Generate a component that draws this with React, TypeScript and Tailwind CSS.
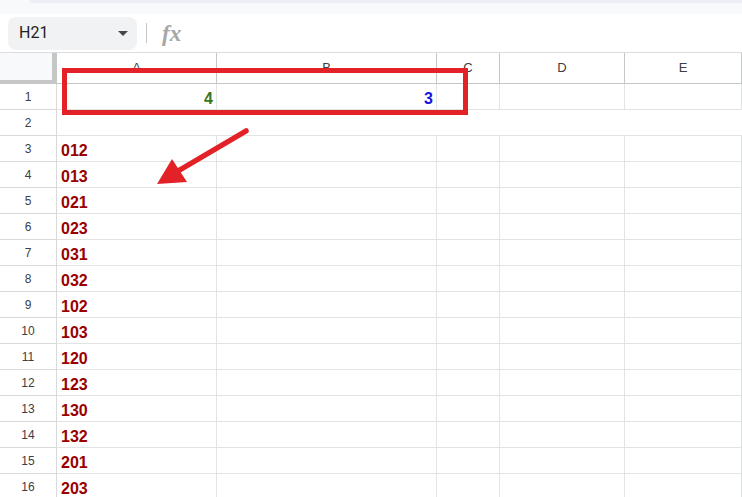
const colWidths = "grid-cols-[57px_160px_220px_63px_125px_1fr]";
const letters = ["A", "B", "C", "D", "E"];

const codes = [
  "012", "013", "021", "023", "031", "032", "102",
  "103", "120", "123", "130", "132", "201", "203",
];

function RowHead({ n }: { n: number }) {
  return (
    <div className="h-[26px] flex items-center justify-center border-r border-b border-[#d9d9d9] text-[12px] text-[#3c4043]">
      {n}
    </div>
  );
}

function Cell({ children, right, className = "" }: { children?: React.ReactNode; right?: boolean; className?: string }) {
  return (
    <div
      className={`h-[26px] flex items-end pb-[1px] border-r border-b border-[#e2e3e3] text-[16px] leading-[18px] font-bold ${
        right ? "justify-end pr-[3px]" : "pl-[4px]"
      } ${className}`}
    >
      {children}
    </div>
  );
}

function FormulaBar() {
  return (
    <div className="h-[39px] flex items-center pl-[8px] border-b border-[#dadce0]">
      <div className="w-[129px] h-[33px] rounded-[8px] bg-[#f0f2f4] flex items-center justify-between pl-[11px] pr-[9px]">
        <span className="text-[16px] text-[#1f1f1f] font-['Roboto',sans-serif]">H21</span>
        <span className="w-0 h-0 border-l-[5px] border-r-[5px] border-t-[5px] border-l-transparent border-r-transparent border-t-[#444746]" />
      </div>
      <div className="ml-[9px] w-px h-[20px] bg-[#c7c7c7]" />
      <span className="ml-[15px] text-[23px] italic font-semibold text-[#a6a6a6] font-['Liberation_Serif',serif] leading-none">
        fx
      </span>
    </div>
  );
}

export default function App() {
  return (
    <div className="relative w-[742px] h-[497px] overflow-hidden bg-white font-['Liberation_Sans',Arial,sans-serif]">
      {/* toolbar edge */}
      <div className="h-[14px] bg-[#f8f9fb]">
        <div className="ml-[30px] h-[3px] bg-[#eceef8]" />
      </div>

      <FormulaBar />

      {/* sheet grid */}
      <div className={`grid ${colWidths}`}>
        <div className="h-[31px] bg-[#f8f9fa] border-r-[5px] border-b-[4px] border-[#c4c7c5]" />
        {letters.map((l) => (
          <div
            key={l}
            className="h-[31px] flex items-center justify-center border-r border-b border-[#c4c7c5] text-[13px] text-[#3c4043]"
          >
            {l}
          </div>
        ))}

        <RowHead n={1} />
        <Cell right className="text-[#38761d]">4</Cell>
        <Cell right className="text-[#1414e0]">3</Cell>
        <Cell />
        <Cell />
        <Cell />

        <RowHead n={2} />
        <div className="col-span-5 h-[26px] border-b border-[#e2e3e3]" />

        {codes.map((c, i) => (
          <div key={c} className="contents">
            <RowHead n={i + 3} />
            <Cell className="text-[#990000]">{c}</Cell>
            <Cell />
            <Cell />
            <Cell />
            <Cell />
          </div>
        ))}
      </div>

      {/* callout box */}
      <div className="absolute left-[62px] top-[68px] w-[406px] h-[47px] border-[5px] border-[#e32228]" />

      {/* callout arrow */}
      <svg className="absolute left-0 top-0 pointer-events-none" width="742" height="497">
        <line x1="246" y1="131" x2="178" y2="171" stroke="#e32228" strokeWidth="5.5" strokeLinecap="round" />
        <polygon points="157,184 172,159 187,182" fill="#e32228" />
      </svg>
    </div>
  );
}
